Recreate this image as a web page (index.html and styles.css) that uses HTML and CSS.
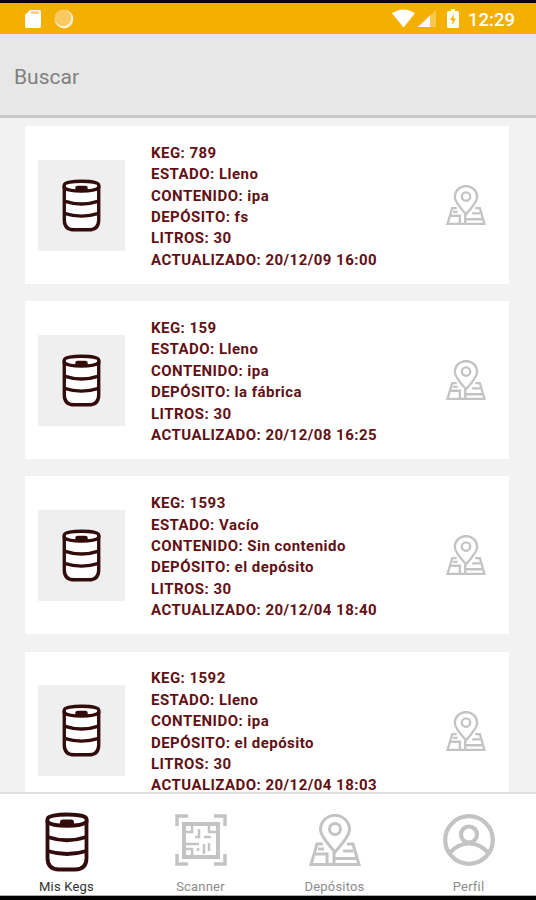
FILE: index.html
```html
<!DOCTYPE html>
<html lang="es">
<head>
    <meta charset="UTF-8">
    <meta name="viewport" content="width=device-width, initial-scale=1.0">
    <title>Mis Kegs</title>
    <link rel="stylesheet" href="styles.css">
</head>
<body>
    <svg class="sprite" width="0" height="0">
        <symbol id="keg" viewBox="0 0 44 60">
            <path d="M2.500 7V46Q2.500 57.500 14 57.500H30Q41.500 57.500 41.500 46V7" fill="#fff"/>
            <path d="M2.500 7C2.500 1 41.500 1 41.500 7V10C36 15 8 15 2.500 10Z" fill="#fff"/>
            <path d="M2.500 25Q22 31.500 41.500 25M2.500 39Q22 45 41.500 39"/>
            <path d="M15 12.500V10Q15 7.500 18 7.500H26Q29 7.500 29 10V12.500Q22 14 15 12.500Z" fill="#320c0a" stroke="none"/>
        </symbol>
        <symbol id="map" viewBox="0 0 52 52">
            <path d="M26 38Q11.500 22 11.500 15.500A14.500 14.200 0 0 1 40.500 15.500Q40.500 22 26 38Z"/>
            <circle cx="26" cy="15" r="5.500"/>
            <path d="M14 30H8L2 50.500H50L44 30H38M6 40H18V50M25 38V50M26 44.500H47M34 37H44M9 35H15"/>
        </symbol>
        <symbol id="scan" viewBox="0 0 52 52">
            <path d="M2 12V2H13M39 2H50V12M50 40V50H39M13 50H2V40" stroke-width="3.500"/>
            <rect x="9" y="10" width="34" height="33" stroke-width="4"/>
            <path d="M11 18H17V12M20 23H24V15M34 12V18H41M29 23H36M11 30H24M11 35H17V41M23 34V37M29 30V40M34 29V37" stroke-width="2.500"/>
        </symbol>
        <symbol id="user" viewBox="0 0 52 52">
            <circle cx="26" cy="26" r="23.800"/>
            <circle cx="26" cy="20.500" r="8"/>
            <path d="M6.500 39Q15 29.500 26 29.500T45.500 39"/>
        </symbol>
    </svg>

    <div class="app">
        <header class="status">
            <svg class="status-sd" viewBox="0 0 16 20"><path d="M5 1H14Q16 1 16 3V17Q16 19 14 19H2Q0 19 0 17V6Z" fill="#fff"/><path d="M6 3.500H14" stroke="#f7ce70" stroke-width="2.500"/></svg>
            <svg class="status-sync" viewBox="0 0 20 20"><circle cx="10" cy="10" r="9.300" fill="#fff3d2"/><circle cx="9" cy="9" r="8.300" fill="#f8ca64"/></svg>
            <svg class="status-wifi" viewBox="0 0 24 19"><path d="M0 4Q12-4 24 4L12 19Z" fill="#fff"/></svg>
            <svg class="status-signal" viewBox="0 0 18 18"><path d="M0 17L18 0V17Z" fill="#fff" opacity=".3"/><path d="M0 17L12 5.500V17Z" fill="#fff"/></svg>
            <svg class="status-battery" viewBox="0 0 12 19"><path d="M4 0H8V2H10.500Q12 2 12 3.500V17.500Q12 19 10.500 19H1.500Q0 19 0 17.500V3.500Q0 2 1.500 2H4Z" fill="#fff"/><path d="M7 5L3 11H5.500L5 16L9 9.500H6.500Z" fill="#f4b000"/></svg>
            <span class="clock">12:29</span>
        </header>
        <div class="search">Buscar</div>

        <main class="list">
            <article class="card">
                <div class="thumb"><svg class="keg"><use href="#keg"/></svg></div>
                <div class="info">
                    <p>KEG: 789</p>
                    <p>ESTADO: Lleno</p>
                    <p>CONTENIDO: ipa</p>
                    <p>DEPÓSITO: fs</p>
                    <p>LITROS: 30</p>
                    <p>ACTUALIZADO: 20/12/09 16:00</p>
                </div>
                <svg class="pin"><use href="#map"/></svg>
            </article>
            <article class="card">
                <div class="thumb"><svg class="keg"><use href="#keg"/></svg></div>
                <div class="info">
                    <p>KEG: 159</p>
                    <p>ESTADO: Lleno</p>
                    <p>CONTENIDO: ipa</p>
                    <p>DEPÓSITO: la fábrica</p>
                    <p>LITROS: 30</p>
                    <p>ACTUALIZADO: 20/12/08 16:25</p>
                </div>
                <svg class="pin"><use href="#map"/></svg>
            </article>
            <article class="card">
                <div class="thumb"><svg class="keg"><use href="#keg"/></svg></div>
                <div class="info">
                    <p>KEG: 1593</p>
                    <p>ESTADO: Vacío</p>
                    <p>CONTENIDO: Sin contenido</p>
                    <p>DEPÓSITO: el depósito</p>
                    <p>LITROS: 30</p>
                    <p>ACTUALIZADO: 20/12/04 18:40</p>
                </div>
                <svg class="pin"><use href="#map"/></svg>
            </article>
            <article class="card">
                <div class="thumb"><svg class="keg"><use href="#keg"/></svg></div>
                <div class="info">
                    <p>KEG: 1592</p>
                    <p>ESTADO: Lleno</p>
                    <p>CONTENIDO: ipa</p>
                    <p>DEPÓSITO: el depósito</p>
                    <p>LITROS: 30</p>
                    <p>ACTUALIZADO: 20/12/04 18:03</p>
                </div>
                <svg class="pin"><use href="#map"/></svg>
            </article>
        </main>

        <nav class="tabs">
            <div class="tab active"><svg class="keg"><use href="#keg"/></svg><span>Mis Kegs</span></div>
            <div class="tab"><svg class="tab-icon"><use href="#scan"/></svg><span>Scanner</span></div>
            <div class="tab"><svg class="tab-icon"><use href="#map"/></svg><span>Depósitos</span></div>
            <div class="tab"><svg class="tab-icon user"><use href="#user"/></svg><span>Perfil</span></div>
        </nav>
    </div>
</body>
</html>
```
FILE: styles.css
```css
* {
    box-sizing: border-box;
}
body {
    margin: 0;
    font-family: Roboto, sans-serif;
    background-color: #f2f2f2;
}
.sprite {
    display: none;
}
.app {
    display: flex;
    flex-direction: column;
    height: 900px;
    border-top: 3px solid #000;
    border-bottom: 4px solid #000;
    overflow: hidden;
}
.status {
    display: flex;
    align-items: center;
    flex: none;
    height: 31px;
    padding: 0 21px 0 25px;
    background-color: #f4b000;
}
.status-sd {
    width: 16px;
    height: 20px;
}
.status-sync {
    width: 20px;
    height: 20px;
    margin-left: 13px;
}
.status-wifi {
    width: 23px;
    height: 19px;
    margin-left: auto;
}
.status-signal {
    width: 18px;
    height: 18px;
    margin-left: 3px;
}
.status-battery {
    width: 12px;
    height: 19px;
    margin: 0 9px 0 11px;
}
.clock {
    color: #fff;
    font-size: 18.5px;
    font-weight: 500;
    line-height: 31px;
    padding-top: 3px;
}
.search {
    flex: none;
    height: 84px;
    padding: 3px 14px 0;
    border-bottom: 3px solid #c8c8c8;
    background-color: #e7e7e7;
    color: #808080;
    font-size: 21px;
    line-height: 81px;
}
.list {
    display: flex;
    flex-direction: column;
    gap: 17.2px;
    flex: 1;
    min-height: 0;
    padding: 8px 27px 0 25px;
    overflow: hidden;
}
.card {
    display: flex;
    align-items: center;
    flex: none;
    height: 158px;
    padding: 0 23px 0 13px;
    background-color: #fff;
}
.thumb {
    display: flex;
    align-items: center;
    justify-content: center;
    width: 87px;
    height: 91px;
    background-color: #efefef;
}
.keg {
    width: 39px;
    height: 53px;
    fill: none;
    stroke: #320c0a;
    stroke-width: 3.8;
}
.info {
    flex: 1;
    padding: 4px 0 0 26px;
    color: #621014;
    font-size: 15px;
    font-weight: 700;
    line-height: 21.4px;
    letter-spacing: 0.46px;
}
.info p {
    margin: 0;
}
.pin,
.tab-icon {
    width: 40px;
    height: 40px;
    fill: none;
    stroke: #c3c3c3;
    stroke-width: 3;
}
.tabs {
    display: flex;
    flex: none;
    height: 104px;
    border-top: 2px solid #e0e0e0;
    border-bottom: 1px solid #aaa;
    background-color: #fff;
}
.tab {
    display: flex;
    flex-direction: column;
    align-items: center;
    flex: 1;
    padding: 18px 1px 0 0;
    color: #8c8c8c;
    font-size: 13px;
    line-height: 16px;
    letter-spacing: 0.2px;
}
.tab-icon {
    width: 52px;
    height: 52px;
    margin: 2px 0 13px;
}
.tab-icon.user {
    stroke-width: 4.2;
}
.tab .keg {
    width: 44px;
    height: 60px;
    margin-bottom: 7px;
}
.tab.active {
    color: #333;
}
```
